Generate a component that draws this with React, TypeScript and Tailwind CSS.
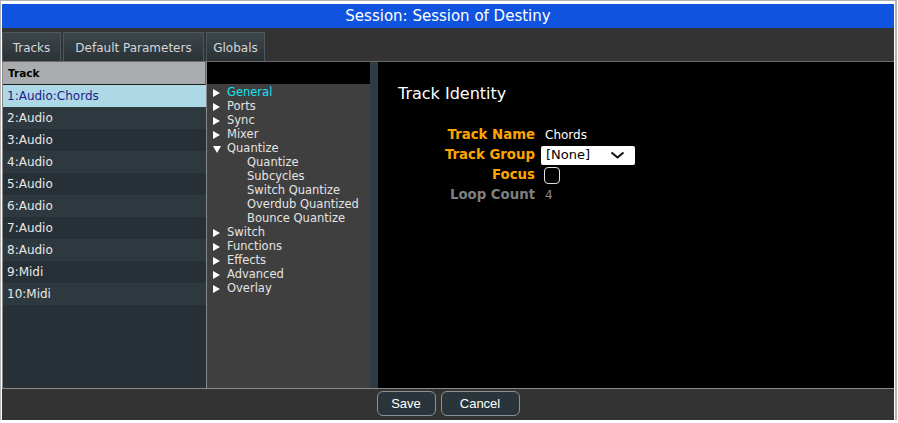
import React from "react";

const tracks = [
  "1:Audio:Chords",
  "2:Audio",
  "3:Audio",
  "4:Audio",
  "5:Audio",
  "6:Audio",
  "7:Audio",
  "8:Audio",
  "9:Midi",
  "10:Midi",
];

type TreeItem = { label: string; open?: boolean; active?: boolean; children?: string[] };

const tree: TreeItem[] = [
  { label: "General", active: true },
  { label: "Ports" },
  { label: "Sync" },
  { label: "Mixer" },
  {
    label: "Quantize",
    open: true,
    children: ["Quantize", "Subcycles", "Switch Quantize", "Overdub Quantized", "Bounce Quantize"],
  },
  { label: "Switch" },
  { label: "Functions" },
  { label: "Effects" },
  { label: "Advanced" },
  { label: "Overlay" },
];

function RightTri() {
  return (
    <svg width="7" height="8" viewBox="0 0 7 8" className="shrink-0">
      <polygon points="0,0 7,4 0,8" fill="#ffffff" />
    </svg>
  );
}

function DownTri() {
  return (
    <svg width="8" height="7" viewBox="0 0 8 7" className="shrink-0">
      <polygon points="0,0 8,0 4,7" fill="#ffffff" />
    </svg>
  );
}

export default function App() {
  return (
    <div className="w-[898px] h-[423px] bg-white font-['DejaVu_Sans',sans-serif]">
      <div className="w-[897px] h-[420px] border-t border-l border-r-2 border-[#b4b4b4] pt-[3px] pl-[1px] pr-[1px] flex flex-col">
        {/* Title bar */}
        <div className="h-[24px] bg-[#1053df] flex items-center justify-center text-white text-[15px] leading-none">
          Session: Session of Destiny
        </div>
        {/* Tab bar */}
        <div className="h-[34px] bg-[#333333] border-b border-[#6a6a6a] flex items-end gap-[2px]">
          {[
            { t: "Tracks", w: "w-[59px]" },
            { t: "Default Parameters", w: "w-[141px]" },
            { t: "Globals", w: "w-[59px]" },
          ].map((tab) => (
            <div
              key={tab.t}
              className={`${tab.w} h-[29px] border border-b-0 border-[#4e585c] bg-gradient-to-b from-[#3c464b] to-[#2a3236] text-[#d6d6d6] text-[12px] flex items-center justify-center pt-[2px]`}
            >
              {tab.t}
            </div>
          ))}
        </div>
        {/* Content */}
        <div className="h-[326px] flex">
          {/* Track list */}
          <div className="w-[205px] border-l border-r border-[#8a8a8a] bg-[#263036] flex flex-col">
            <div className="h-[23px] bg-[#a9acae] border-b border-[#1e1e1e] border-r border-r-[#6a6a6a] flex items-center pl-[5px] pt-[2px] text-[10.5px] font-bold text-black">
              Track
            </div>
            {tracks.map((t, i) => (
              <div
                key={t}
                className={`h-[22px] flex items-center pl-[4px] text-[12px] ${
                  i === 0
                    ? "bg-[#add8e6] text-[#1c1c8a]"
                    : i % 2 === 1
                    ? "bg-[#2e393f] text-[#e8e8e8]"
                    : "bg-[#263036] text-[#e8e8e8]"
                }`}
              >
                {t}
              </div>
            ))}
          </div>
          {/* Tree */}
          <div className="w-[163px] bg-[#3f3f3f] flex flex-col">
            <div className="h-[22px] bg-black" />
            <div className="flex flex-col text-[11.5px] text-[#e4e4e4] pt-[2px]">
              {tree.map((item) => (
                <React.Fragment key={item.label}>
                  <div className="h-[14px] flex items-center pl-[6px]">
                    <div className="w-[14px] flex items-center">
                      {item.open ? <DownTri /> : <RightTri />}
                    </div>
                    <span className={item.active ? "text-[#15e3ef]" : ""}>{item.label}</span>
                  </div>
                  {item.children?.map((c) => (
                    <div key={c} className="h-[14px] flex items-center pl-[40px]">
                      {c}
                    </div>
                  ))}
                </React.Fragment>
              ))}
            </div>
          </div>
          {/* Splitter */}
          <div className="w-[8px] bg-[#2e3b42]" />
          {/* Right panel */}
          <div className="flex-1 bg-black pl-[20px] pt-[22px]">
            <div className="text-white text-[16px] leading-[19px]">Track Identity</div>
            <div className="mt-[22px] grid grid-cols-[137px_auto] gap-x-[6px] auto-rows-[20px] items-center">
              <div className="text-right font-bold text-[13.3px] text-[#ffa500]">Track Name</div>
              <div className="pl-[4px] text-[12px] text-white">Chords</div>

              <div className="text-right font-bold text-[13.3px] text-[#ffa500]">Track Group</div>
              <div className="w-[94px] h-[19px] bg-white rounded-[2px] flex items-center justify-between pl-[5px] pr-[10px] text-[13px] text-black">
                <span>[None]</span>
                <svg width="15" height="8" viewBox="0 0 15 8">
                  <polyline points="1.5,1.5 7.5,6.5 13.5,1.5" fill="none" stroke="#111" strokeWidth="2" />
                </svg>
              </div>

              <div className="text-right font-bold text-[13.3px] text-[#ffa500]">Focus</div>
              <div className="pl-[3px]">
                <div className="w-[16px] h-[17px] rounded-[4px] border-[1.5px] border-[#e0e0e0] bg-black" />
              </div>

              <div className="text-right font-bold text-[13.3px] text-[#7f7f7f]">Loop Count</div>
              <div className="pl-[4px] text-[12px] text-[#8a8a8a]">4</div>
            </div>
          </div>
        </div>
        {/* Bottom bar */}
        <div className="h-[32px] bg-[#333333] border-t border-[#8a8a8a] flex justify-center items-start pt-[2px] gap-[5px]">
          <button className="w-[59px] h-[25px] bg-[#29353a] border border-[#8b9296] rounded-[6px] text-white text-[13px] font-['Liberation_Sans',sans-serif]">
            Save
          </button>
          <button className="w-[79px] h-[25px] bg-[#29353a] border border-[#8b9296] rounded-[6px] text-white text-[13px] font-['Liberation_Sans',sans-serif]">
            Cancel
          </button>
        </div>
      </div>
    </div>
  );
}
